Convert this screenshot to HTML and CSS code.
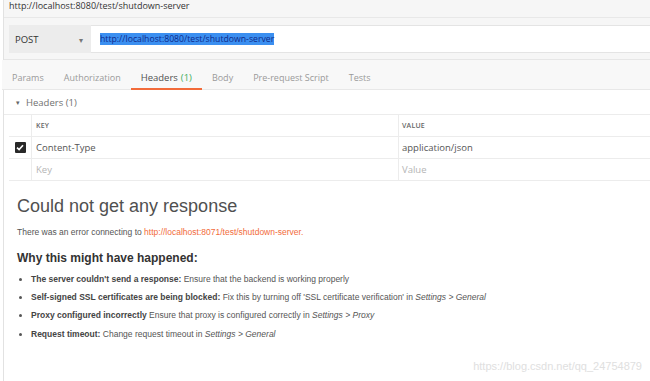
FILE: index.html
```html
<!DOCTYPE html>
<html lang="en">
<head>
<meta charset="UTF-8" />
<title>shutdown-server</title>
<link rel="stylesheet" href="styles.css">
</head>
<body>
  <div class="page">
    <div class="title-bar">http://localhost:8080/test/shutdown-server</div>

    <div class="request-bar">
      <div class="method">
        <span>POST</span>
        <span class="caret">&#9662;</span>
      </div>
      <div class="url"><span class="selected">http://localhost:8080/test/shutdown-server</span></div>
    </div>

    <div class="tabs">
      <div class="tab">Params</div>
      <div class="tab">Authorization</div>
      <div class="tab active">Headers <span class="count">(1)</span></div>
      <div class="tab">Body</div>
      <div class="tab">Pre-request Script</div>
      <div class="tab">Tests</div>
    </div>

    <div class="section-title"><span class="tri">&#9662;</span> Headers (1)</div>

    <div class="headers-table">
      <div class="row head">
        <div class="cell check"></div>
        <div class="cell key">KEY</div>
        <div class="cell value">VALUE</div>
      </div>
      <div class="row">
        <div class="cell check">
          <span class="box">
            <svg width="8" height="7" viewBox="0 0 8 7"><path d="M1 3.6 L3.1 5.6 L7 1.2" fill="none" stroke="#fff" stroke-width="1.6"/></svg>
          </span>
        </div>
        <div class="cell key">Content-Type</div>
        <div class="cell value">application/json</div>
      </div>
      <div class="row">
        <div class="cell check"></div>
        <div class="cell key placeholder">Key</div>
        <div class="cell value placeholder">Value</div>
      </div>
    </div>

    <div class="response">
      <h1>Could not get any response</h1>
      <p class="error">There was an error connecting to <a href="#">http://localhost:8071/test/shutdown-server.</a></p>
      <h2>Why this might have happened:</h2>
      <ul>
        <li><strong>The server couldn't send a response:</strong> Ensure that the backend is working properly</li>
        <li><strong>Self-signed SSL certificates are being blocked:</strong> Fix this by turning off 'SSL certificate verification' in <em>Settings &gt; General</em></li>
        <li><strong>Proxy configured incorrectly</strong> Ensure that proxy is configured correctly in <em>Settings &gt; Proxy</em></li>
        <li><strong>Request timeout:</strong> Change request timeout in <em>Settings &gt; General</em></li>
      </ul>
    </div>

    <div class="watermark">https://blog.csdn.net/qq_24754879</div>
  </div>
</body>
</html>
```

FILE: styles.css
```css
body {
  margin: 0;
  background: #fff;
  font-family: 'Open Sans', 'Noto Sans', sans-serif;
  color: #505050;
  overflow: hidden;
}

/* whole app pane, thin rule on the left */
.page {
  margin-left: 3px;
  border-left: 1px solid #e2e2e2;
  height: 381px;
  position: relative;
}

.title-bar {
  height: 17px;
  line-height: 12px;
  padding-left: 5px;
  font-size: 9px;
  color: #333;
  background: #f6f6f6;
  border-bottom: 1px solid #e8e8e8;
}

.request-bar {
  display: flex;
  padding: 7px 0 6px 5px;
  background: #f6f6f6;
  border-bottom: 1px solid #e6e6e6;
}
.method {
  width: 82px;
  height: 28px;
  box-sizing: border-box;
  display: flex;
  align-items: center;
  justify-content: space-between;
  padding: 0 8px 0 6px;
  background: #ececec;
  font-size: 9.5px;
  color: #333;
}
.caret {
  font-size: 8px;
  color: #777;
}
.url {
  flex: 1;
  height: 28px;
  display: flex;
  align-items: center;
  padding-left: 9px;
  background: #fff;
  border-top: 1px solid #e4e4e4;
  border-bottom: 1px solid #e4e4e4;
  box-sizing: border-box;
  font-size: 8.7px;
}
.selected {
  background: #3b8ff0;
  color: #0f2a8a;
  line-height: 12px;
}

.tabs {
  display: flex;
  height: 29px;
  align-items: stretch;
  background: #f8f8f8;
  border-bottom: 1px solid #e8e8e8;
  margin-left: -2px;
}
.tab {
  display: flex;
  align-items: center;
  padding: 6px 10px 0;
  font-size: 9px;
  color: #9a9a9a;
  border-bottom: 2px solid transparent;
  margin-bottom: -1px;
}
.tab.active {
  color: #505050;
  font-size: 9.5px;
  border-bottom-color: #f26b3a;
}
.count {
  color: #3fae5f;
  margin-left: 3px;
}

.section-title {
  height: 25px;
  display: flex;
  align-items: center;
  padding: 0 0 0 12px;
  box-sizing: border-box;
  font-size: 9.5px;
  color: #707070;
  border-bottom: 1px solid #ececec;
}
.tri {
  font-size: 7px;
  margin-right: 6px;
  color: #666;
}

.headers-table {
  margin-left: 5px;
}
.row {
  display: flex;
  height: 21px;
  border-bottom: 1px solid #ececec;
}
.cell {
  display: flex;
  align-items: center;
  font-size: 9.5px;
  color: #555;
}
.check {
  width: 22px;
  justify-content: center;
  border-right: 1px solid #ececec;
}
.key {
  width: 362px;
  padding-left: 4px;
  border-right: 1px solid #ececec;
}
.value {
  flex: 1;
  padding-left: 3px;
}
.row.head .cell {
  font-size: 7px;
  font-weight: 600;
  color: #666;
  letter-spacing: 0.2px;
}
.placeholder {
  color: #b5b5b5;
}
.box {
  width: 11px;
  height: 11px;
  background: #282828;
  border-radius: 1px;
  display: flex;
  align-items: center;
  justify-content: center;
}

/* error block, arial like the original view */
.response {
  padding: 15px 0 0 13px;
  font-family: 'Liberation Sans', Arial, sans-serif;
}
.response h1 {
  margin: 0;
  font-size: 18px;
  font-weight: normal;
  color: #505050;
}
.error {
  margin: 10px 0 0;
  font-size: 8.5px;
  color: #555;
}
.error a {
  color: #f26b3a;
  text-decoration: none;
}
.response h2 {
  margin: 14px 0 0;
  font-size: 12px;
  color: #333;
}
.response ul {
  margin: 5px 0 0;
  padding-left: 14px;
}
.response li {
  font-size: 8.5px;
  line-height: 18.2px;
  color: #555;
}
.response strong {
  color: #444;
}

.watermark {
  position: absolute;
  right: 8px;
  bottom: 9px;
  font-family: 'Liberation Sans', Arial, sans-serif;
  font-size: 11px;
  color: #e0e0e0;
}
```
